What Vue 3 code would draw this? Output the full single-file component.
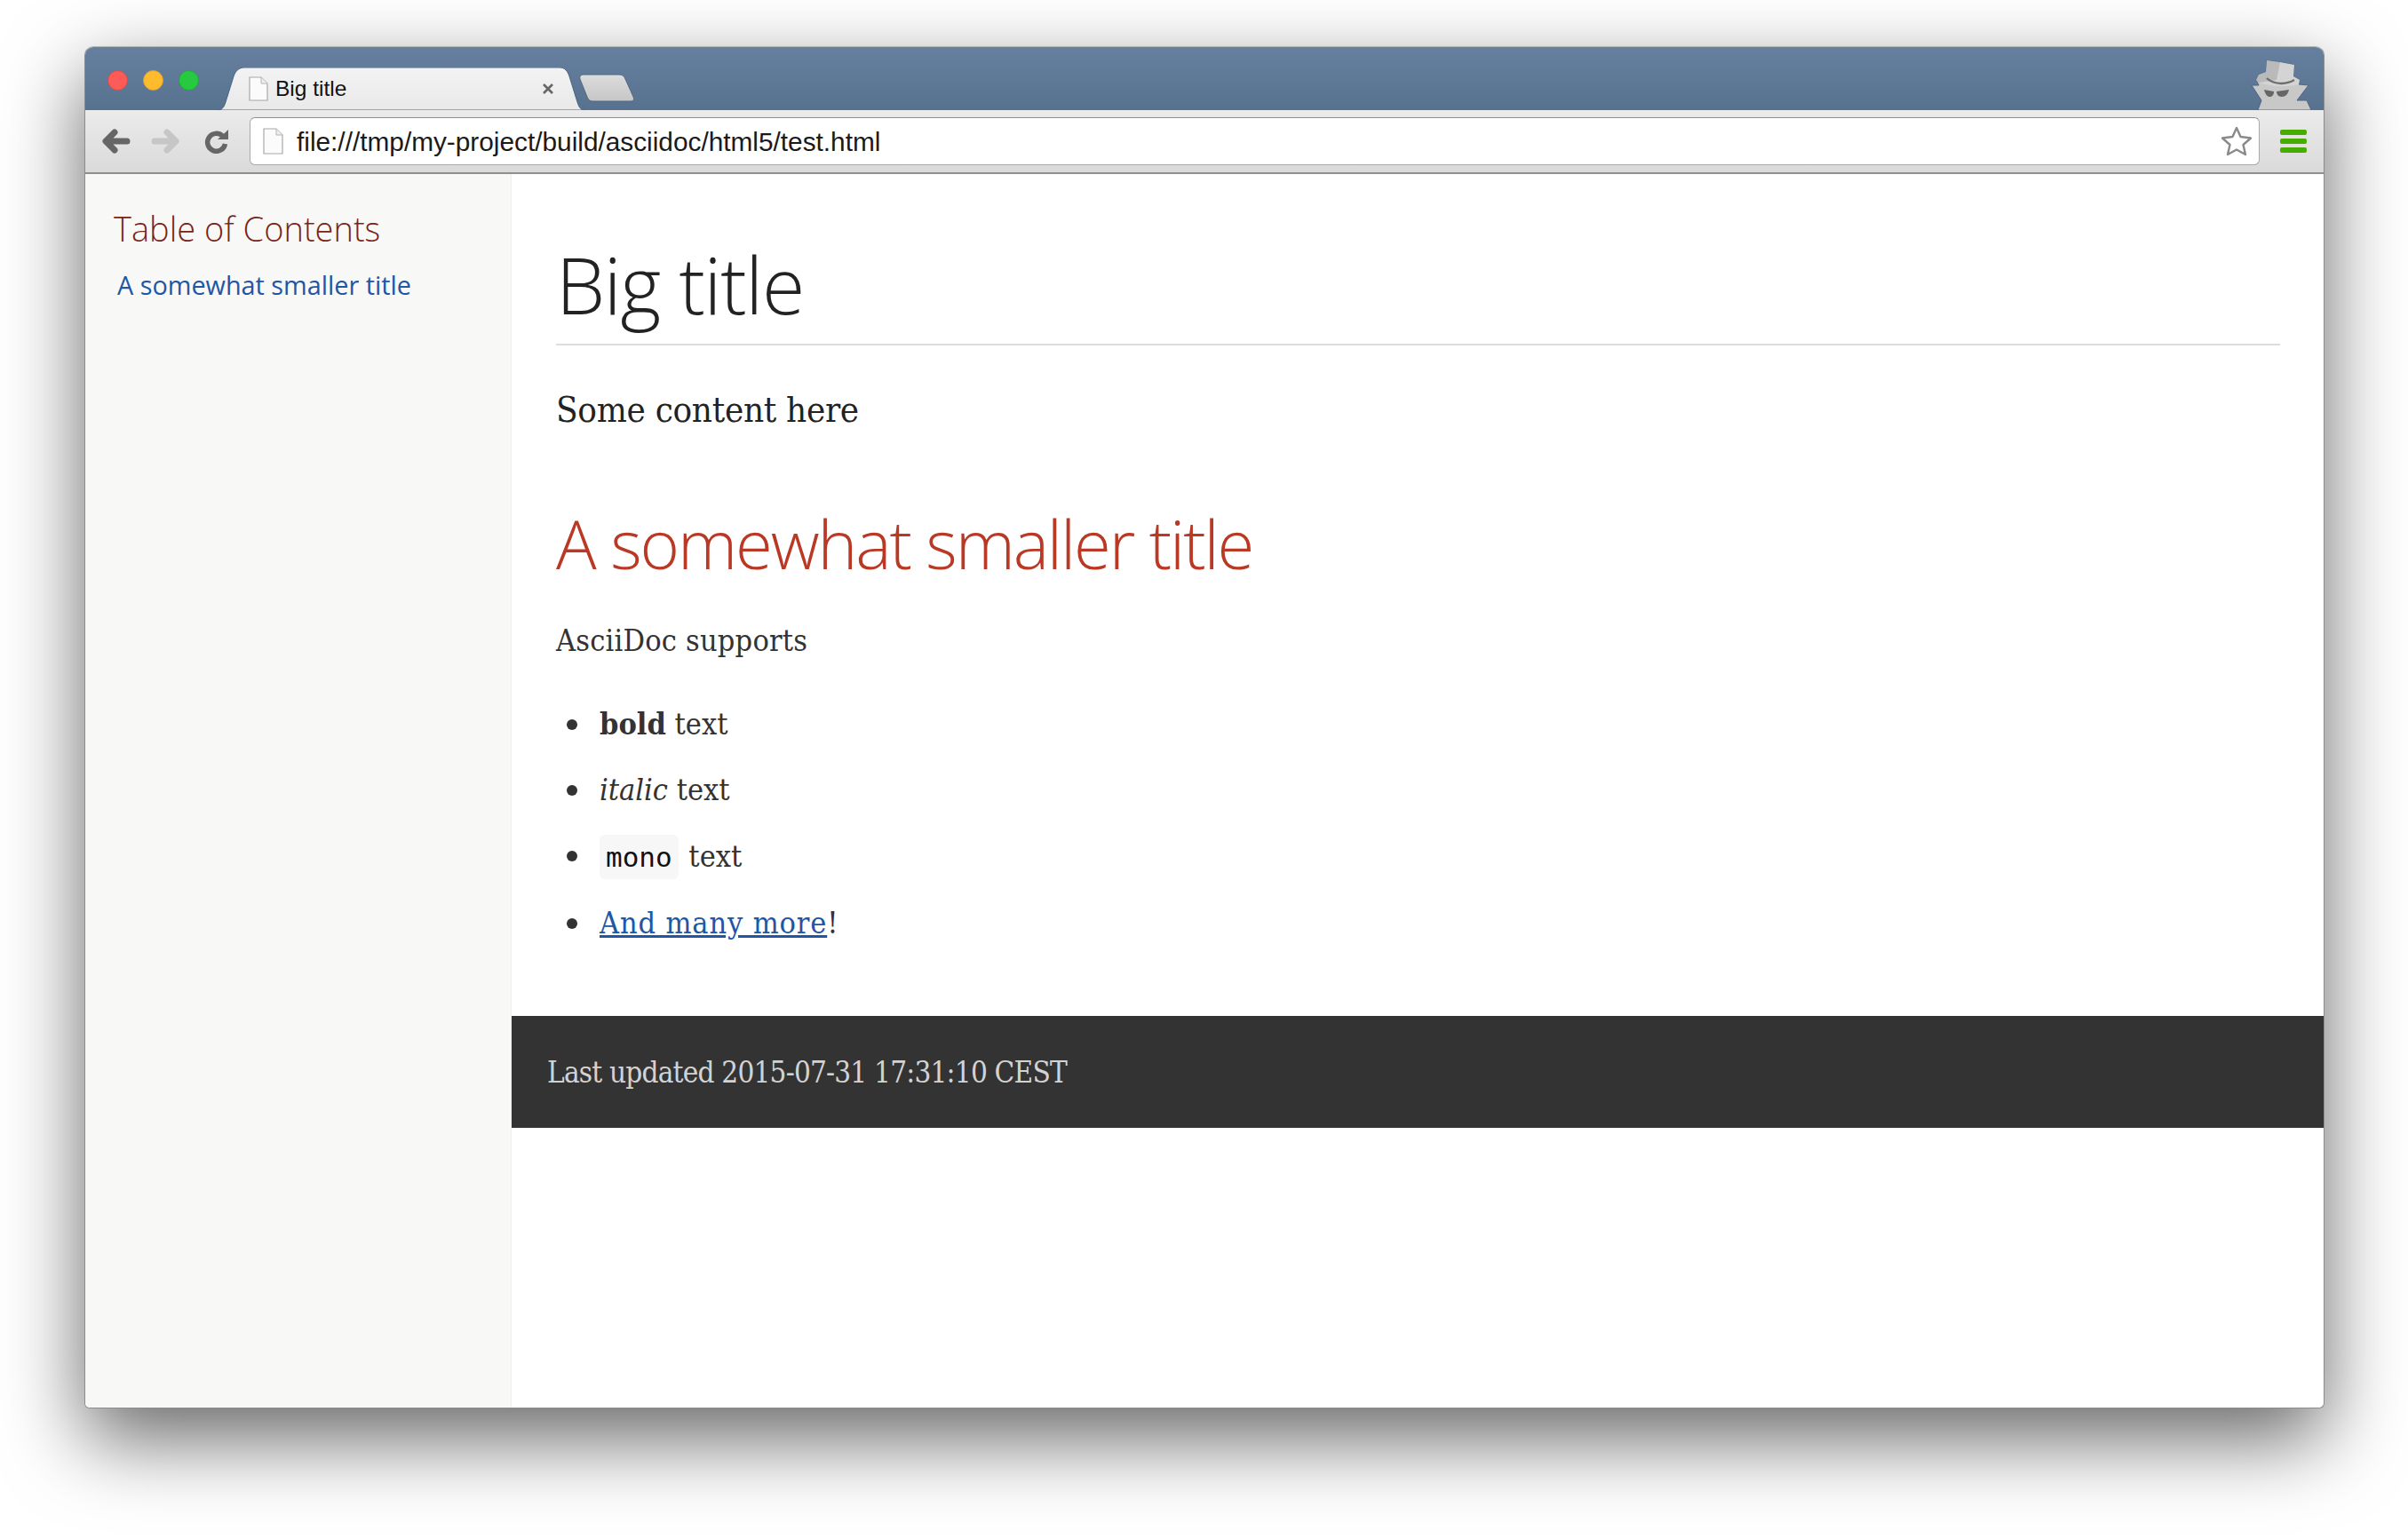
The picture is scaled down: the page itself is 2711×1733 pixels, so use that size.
<template>
  <div class="page">
    <div class="window">
      <div class="titlebar">
        <div class="lights">
          <span class="light red"></span>
          <span class="light yellow"></span>
          <span class="light green"></span>
        </div>
        <div class="tab">
          <svg class="tab-shape" width="413" height="48" viewBox="0 0 413 48">
            <defs>
              <linearGradient id="tabFill" x1="0" y1="0" x2="0" y2="1">
                <stop offset="0" stop-color="#f3f3f3" />
                <stop offset="1" stop-color="#e9e9e9" />
              </linearGradient>
            </defs>
            <path d="M0 48 C5 48 7 45 9 39 L18 10 C20 4 24 0 30 0 L385 0 C391 0 394 4 396 10 L405 39 C407 45 409 48 413 48 Z" fill="url(#tabFill)" stroke="#4a6280" stroke-width="1" />
          </svg>
          <svg class="page-icon" width="22" height="28" viewBox="0 0 22 28">
            <path d="M1 1 H14 L21 8 V27 H1 Z" fill="#fbfbfb" stroke="#a8a8a8" stroke-width="1.2" />
            <path d="M14 1 V8 H21" fill="#eee" stroke="#b5b5b5" stroke-width="1" />
          </svg>
          <span class="tab-title">Big title</span>
          <svg class="tab-close" width="14" height="14" viewBox="0 0 14 14">
            <path d="M2 2 L12 12 M12 2 L2 12" stroke="#666" stroke-width="2.6" />
          </svg>
        </div>
        <svg class="new-tab" width="64" height="32" viewBox="0 0 64 32">
          <defs>
            <linearGradient id="newTabFill" x1="0" y1="0" x2="0" y2="1">
              <stop offset="0" stop-color="#dcdcdc" />
              <stop offset="1" stop-color="#c6c6c6" />
            </linearGradient>
          </defs>
          <path d="M6 1 H46 C50 1 52 3 53 6 L62 26 C63.5 29 62 31 59 31 H16 C13 31 11 29 10 26 L2 6 C1 3 3 1 6 1 Z" fill="url(#newTabFill)" stroke="#4f6884" stroke-width="1" />
        </svg>
        <svg class="incognito" width="68" height="56" viewBox="0 0 68 56">
          <path d="M17 0 L32 2 L48 5 L47 18 L54 22 L53 27 L64 28 L51 45 L62 45 L67 56 L7 56 L11 45 L0 28 L8 28 L5 22 L8 16 L16 13 Z" fill="#c8c8c8" stroke="#4d6786" stroke-width="1" stroke-linejoin="round" />
          <path d="M32 2 L48 5 L47 18 L54 22 L53 27 C42 30 22 30 8 25 L28 22 Z" fill="#d4d4d4" />
          <path d="M17 0 L32 2 L28 22 L8 25 L5 22 L8 16 L16 13 Z" fill="#bababa" />
          <path d="M17 20 C24 27 38 28 48 22" fill="none" stroke="#6e6e6e" stroke-width="2.4" />
          <path d="M14 33 L25 35 C25 39 23 41 20 41 C17 41 15 37 14 33 Z M28 35 L42 33 C41 38 38 41 34 41 C30 41 28 38 28 35 Z" fill="#666" />
        </svg>
      </div>
      <div class="toolbar">
        <svg class="nav-icon" width="32" height="28" viewBox="0 0 32 28">
          <path d="M28 14 H6 M14 4 L4 14 L14 24" fill="none" stroke="#666" stroke-width="7" stroke-linecap="round" stroke-linejoin="round" />
        </svg>
        <svg class="nav-icon forward" width="32" height="28" viewBox="0 0 32 28">
          <path d="M4 14 H26 M18 4 L28 14 L18 24" fill="none" stroke="#c6c6c6" stroke-width="7" stroke-linecap="round" stroke-linejoin="round" />
        </svg>
        <svg class="nav-icon reload" width="28" height="28" viewBox="0 0 28 28">
          <path d="M20.5 8 A10 10 0 1 0 23.5 17" fill="none" stroke="#666" stroke-width="5.5" />
          <path d="M15 12 L27 12 L27 1 Z" fill="#666" />
        </svg>
        <div class="omnibox">
          <svg class="url-icon" width="23" height="30" viewBox="0 0 23 30">
            <path d="M1 1 H15 L22 8 V29 H1 Z" fill="#fbfbfb" stroke="#a8a8a8" stroke-width="1.2" />
            <path d="M15 1 V8 H22" fill="#eee" stroke="#b5b5b5" stroke-width="1" />
          </svg>
          <span class="url">file:///tmp/my-project/build/asciidoc/html5/test.html</span>
          <svg class="star" width="36" height="34" viewBox="0 0 36 34">
            <path d="M18 2 L22.5 12 L34 13.5 L25.5 21 L28 32 L18 26.5 L8 32 L10.5 21 L2 13.5 L13.5 12 Z" fill="#fff" stroke="#8a8a8a" stroke-width="2.4" stroke-linejoin="round" />
          </svg>
        </div>
        <div class="menu">
          <span></span>
          <span></span>
          <span></span>
        </div>
      </div>
      <div class="viewport">
        <aside class="toc">
          <div class="toc-title">Table of Contents</div>
          <a class="toc-link">A somewhat smaller title</a>
        </aside>
        <main class="main">
          <div class="content">
            <h1>Big title</h1>
            <p class="lead">Some content here</p>
            <h2>A somewhat smaller title</h2>
            <p class="para">AsciiDoc supports</p>
            <ul>
              <li><strong>bold</strong> text</li>
              <li><em>italic</em> text</li>
              <li class="mono-row"><code>mono</code> text</li>
              <li class="link-row"><a>And many more</a>!</li>
            </ul>
          </div>
          <footer class="footer">Last updated 2015-07-31 17:31:10 CEST</footer>
        </main>
      </div>
    </div>
  </div>
</template>

<script setup>
</script>

<style>
html, body {
  margin: 0;
  background: #fff;
}
</style>

<style scoped>
.page {
  width: 2711px;
  height: 1733px;
  padding: 52px 95px 0 95px;
  box-sizing: border-box;
  overflow: hidden;
}
.window {
  display: flex;
  flex-direction: column;
  width: 2522px;
  height: 1534px;
  border-radius: 10px 10px 6px 6px;
  overflow: hidden;
  border: 1px solid #8c8c8c;
  border-top-color: #b5b5b5;
  box-sizing: border-box;
  box-shadow: 0 34px 90px rgba(0, 0, 0, 0.6);
  background: #fff;
}

.titlebar {
  display: flex;
  align-items: flex-end;
  height: 71px;
  flex: none;
  background: linear-gradient(#667f9f, #57728f);
}
.lights {
  display: flex;
  gap: 17px;
  align-self: flex-start;
  margin: 26px 0 0 25px;
}
.light {
  width: 23px;
  height: 23px;
  border-radius: 50%;
  box-sizing: border-box;
}
.red { background: #fc5b57; border: 1px solid #df4744; }
.yellow { background: #fdbb2d; border: 1px solid #dd9f23; }
.green { background: #26c940; border: 1px solid #1eab2f; }

.tab {
  position: relative;
  display: flex;
  align-items: center;
  width: 413px;
  height: 48px;
  margin-left: 21px;
  box-sizing: border-box;
  padding: 0 0 0 35px;
}
.tab-shape {
  position: absolute;
  left: 0;
  top: 0;
}
.page-icon, .tab-title, .tab-close {
  position: relative;
}
.tab-title {
  margin-left: 8px;
  font: 24.5px "Liberation Sans", Arial, sans-serif;
  color: #111;
}
.tab-close {
  margin-left: auto;
  margin-right: 34px;
}
.new-tab {
  margin: 0 0 9px -7px;
}
.incognito {
  margin-left: auto;
  margin-right: 13px;
}

.toolbar {
  display: flex;
  align-items: center;
  height: 72px;
  flex: none;
  box-sizing: border-box;
  padding-left: 19px;
  background: linear-gradient(#ebebeb, #dadada);
  border-bottom: 2px solid #8f8f8f;
}
.forward {
  margin-left: 23px;
}
.reload {
  margin-left: 28px;
}
.omnibox {
  display: flex;
  align-items: center;
  width: 2263px;
  height: 54px;
  margin-left: 23px;
  padding: 0 7px 0 14px;
  box-sizing: border-box;
  background: #fff;
  border: 1px solid #a9a9a9;
  border-top-color: #8e8e8e;
  border-radius: 6px;
}
.url {
  margin-left: 15px;
  padding-top: 2px;
  font: 29.8px "Liberation Sans", Arial, sans-serif;
  color: #1a1a1a;
}
.star {
  margin-left: auto;
}
.menu {
  display: flex;
  flex-direction: column;
  gap: 4px;
  margin-left: 23px;
}
.menu span {
  display: block;
  width: 30px;
  height: 6px;
  border-radius: 2px;
  background: #46ad00;
}

.viewport {
  display: flex;
  flex: 1;
  min-height: 0;
}
.toc {
  width: 480px;
  flex: none;
  box-sizing: border-box;
  padding: 0 0 0 32px;
  background: #f8f8f7;
  border-right: 1px solid #efefed;
}
.toc-title {
  margin-top: 33px;
  font: 300 38px/56px "Open Sans", sans-serif;
  color: #7a2518;
}
.toc-link {
  display: block;
  margin: 16px 0 0 4px;
  font: 400 28.8px/40px "Open Sans", sans-serif;
  color: #2156a5;
}
.main {
  flex: 1;
  min-width: 0;
}
.content {
  padding: 0 49px 0 50px;
  height: 948px;
  box-sizing: border-box;
  font-family: "DejaVu Serif Condensed", "DejaVu Serif", serif;
  color: #333;
}
h1 {
  margin: 0;
  height: 193px;
  box-sizing: border-box;
  padding-top: 64px;
  border-bottom: 2px solid #dddddf;
  font: 300 88px/120px "Open Sans", sans-serif;
  letter-spacing: -1.3px;
  color: #222;
}
.lead {
  margin: 0;
  padding-top: 45px;
  font-size: 40px;
  line-height: 54px;
  letter-spacing: -0.3px;
  color: #222;
}
h2 {
  margin: 0;
  padding-top: 72px;
  font: 300 76px/104px "Open Sans", sans-serif;
  letter-spacing: -2.1px;
  color: #ba3925;
}
.para {
  margin: 0;
  padding-top: 34px;
  font-size: 34px;
  line-height: 46px;
  letter-spacing: 0.2px;
}
ul {
  list-style: none;
  margin: 0;
  padding: 48px 0 0 49px;
  font-size: 34px;
  line-height: 46px;
}
li {
  position: relative;
  margin-bottom: 28px;
}
li::before {
  content: "";
  position: absolute;
  left: -37px;
  top: 18px;
  width: 12px;
  height: 12px;
  border-radius: 50%;
  background: #333;
}
.mono-row {
  height: 48px;
}
.link-row {
  letter-spacing: 0.85px;
}
em {
  font-style: italic;
}
code {
  display: inline-block;
  padding: 0 7px;
  margin-right: 2px;
  height: 50px;
  border-radius: 6px;
  background: #f7f7f8;
  color: #111;
  font: 31px/50px "DejaVu Sans Mono", monospace;
}
li a {
  color: #2156a5;
  text-decoration: underline;
}
.footer {
  display: flex;
  align-items: center;
  height: 126px;
  padding-left: 40px;
  background: #333;
  color: rgba(255, 255, 255, 0.8);
  font: 33px "DejaVu Serif Condensed", "DejaVu Serif", serif;
  letter-spacing: -0.8px;
}
</style>
